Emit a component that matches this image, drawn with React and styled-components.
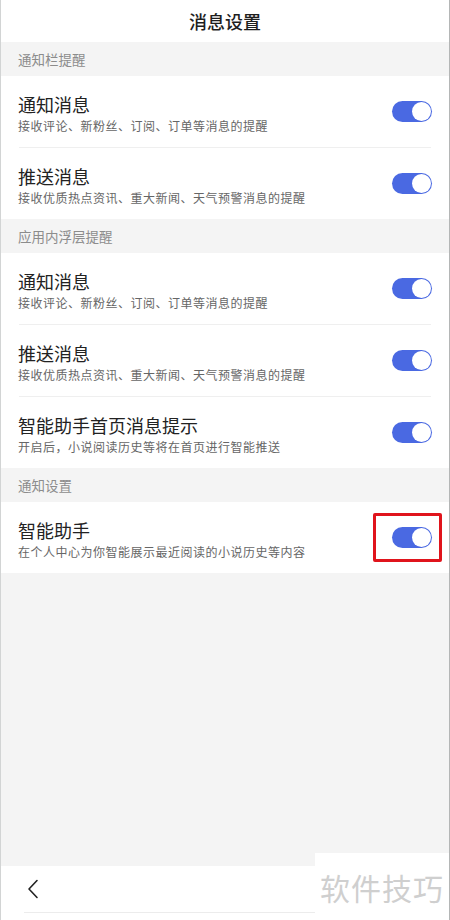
import React from 'react';
import styled, { createGlobalStyle } from 'styled-components';

const GlobalStyle = createGlobalStyle`
	html, body {
		margin: 0;
		padding: 0;
		background: #ffffff;
	}
	body {
		font-family: "Noto Sans CJK SC", "Noto Sans", sans-serif;
	}
`;

const groups = [
	{
		title: '通知栏提醒',
		items: [
			{ name: '通知消息', desc: '接收评论、新粉丝、订阅、订单等消息的提醒' },
			{ name: '推送消息', desc: '接收优质热点资讯、重大新闻、天气预警消息的提醒' },
		],
	},
	{
		title: '应用内浮层提醒',
		items: [
			{ name: '通知消息', desc: '接收评论、新粉丝、订阅、订单等消息的提醒' },
			{ name: '推送消息', desc: '接收优质热点资讯、重大新闻、天气预警消息的提醒' },
			{ name: '智能助手首页消息提示', desc: '开启后，小说阅读历史等将在首页进行智能推送' },
		],
	},
	{
		title: '通知设置',
		items: [
			{ name: '智能助手', desc: '在个人中心为你智能展示最近阅读的小说历史等内容', marked: true },
		],
	},
];

function Toggle()
{
	return (
		<Track>
			<Knob />
		</Track>
	);
}

function SettingRow(props)
{
	return (
		<Row>
			<Texts>
				<Name>{props.name}</Name>
				<Desc>{props.desc}</Desc>
			</Texts>
			<Toggle />
			{props.marked && <Mark />}
		</Row>
	);
}

function App()
{
	return (
		<Screen>
			<GlobalStyle />
			<Header>消息设置</Header>
			{groups.map((g, gi) => (
				<div key={gi}>
					<SectionHead>{g.title}</SectionHead>
					{g.items.map((it, i) => (
						<React.Fragment key={i}>
							{i > 0 && <Divider />}
							<SettingRow {...it} />
						</React.Fragment>
					))}
				</div>
			))}
			<Filler />
			<BottomBar>
				<BackButton>
					<svg width="12" height="20" viewBox="0 0 12 20" fill="none">
						<path d="M10 1.5 L2 10 L10 18.5" stroke="#222" strokeWidth="1.6" strokeLinecap="round" strokeLinejoin="round" />
					</svg>
				</BackButton>
				<BarLine />
			</BottomBar>
			<Watermark>软件技巧</Watermark>
		</Screen>
	);
}

const Screen = styled.div`
	position: relative;
	box-sizing: border-box;
	width: 450px;
	height: 920px;
	display: flex;
	flex-direction: column;
	background: #f4f4f4;
	border-left: 1px solid #d2d4d4;
	border-right: 1px solid #b4b6b6;
	overflow: hidden;
`;

const Header = styled.div`
	height: 42px;
	flex-shrink: 0;
	display: flex;
	align-items: center;
	justify-content: center;
	background: #ffffff;
	font-size: 18px;
	font-weight: 500;
	color: #1e1e1e;
`;

const SectionHead = styled.div`
	height: 34px;
	display: flex;
	align-items: center;
	padding-left: 17px;
	font-size: 13.5px;
	color: #8c8c8c;
	background: #f4f4f4;
`;

const Row = styled.div`
	position: relative;
	height: 71px;
	display: flex;
	align-items: center;
	justify-content: space-between;
	padding: 0 17px;
	background: #ffffff;
`;

const Texts = styled.div`
	display: flex;
	flex-direction: column;
	margin-top: 4px;
`;

const Name = styled.div`
	font-size: 18px;
	line-height: 24px;
	color: #222222;
`;

const Desc = styled.div`
	margin-top: 1px;
	font-size: 12px;
	letter-spacing: 0.5px;
	line-height: 18px;
	color: #666666;
`;

const Divider = styled.div`
	height: 1px;
	background: #ffffff;
	border-left: 18px solid #ffffff;
	border-right: 18px solid #ffffff;
	box-shadow: inset 0 0 0 1px #efefef;
`;

const Track = styled.div`
	width: 38px;
	height: 21px;
	border-radius: 11px;
	background: #4a69e2;
	display: flex;
	align-items: center;
	justify-content: flex-end;
	padding: 0 1px;
	flex-shrink: 0;
`;

const Knob = styled.div`
	width: 19px;
	height: 19px;
	border-radius: 50%;
	background: #ffffff;
`;

const Mark = styled.div`
	position: absolute;
	left: 372px;
	top: 11px;
	width: 63px;
	height: 43px;
	border: 3px solid #e0141c;
	border-radius: 2px;
`;

const Filler = styled.div`
	flex: 1;
	background: #f4f4f4;
`;

const BottomBar = styled.div`
	height: 54px;
	flex-shrink: 0;
	display: flex;
	flex-direction: column;
	background: #ffffff;
`;

const BackButton = styled.div`
	height: 46px;
	display: flex;
	align-items: center;
	padding-left: 26px;
`;

const BarLine = styled.div`
	height: 1px;
	margin-left: 23px;
	background: #ececec;
`;

const Watermark = styled.div`
	position: absolute;
	right: 0;
	bottom: 0;
	width: 134px;
	height: 67px;
	display: flex;
	align-items: center;
	justify-content: center;
	background: #ffffff;
	font-size: 30px;
	color: #cfcfcf;
	letter-spacing: 1px;
`;

export default App;
